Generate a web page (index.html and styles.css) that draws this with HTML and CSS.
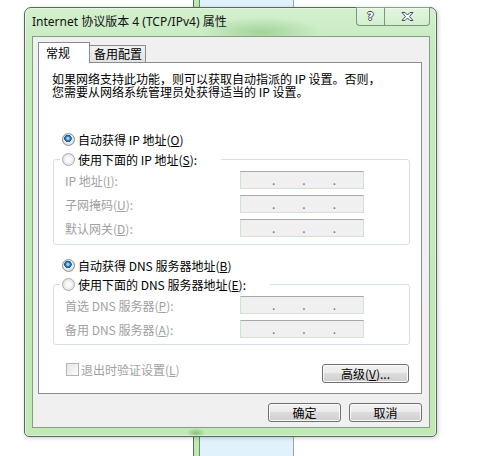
FILE: index.html
```html
<!DOCTYPE html>
<html lang="zh-CN">
<head>
    <meta charset="UTF-8">
    <meta name="viewport" content="width=device-width, initial-scale=1.0">
    <title>Internet 协议版本 4 (TCP/IPv4) 属性</title>
    <link rel="stylesheet" href="styles.css">
</head>
<body>
    <!-- window behind the dialog -->
    <div class="bg-window"></div>

    <div class="dialog">
        <div class="title-bar">
            <span class="title">Internet 协议版本 4 (TCP/IPv4) 属性</span>
            <div class="caption-buttons">
                <div class="cap-btn help"><span>?</span></div>
                <div class="cap-btn close">
                    <svg width="13" height="9" viewBox="0 0 13 9">
                        <polygon points="1,0.5 4,0.5 6.5,3 9,0.5 12,0.5 8.5,4.5 12,8.5 9,8.5 6.5,6 4,8.5 1,8.5 4.5,4.5"
                                 fill="#fff" stroke="#3d4b5c" stroke-width="1" stroke-linejoin="round"/>
                    </svg>
                </div>
            </div>
        </div>

        <div class="client">
            <div class="tabs">
                <div class="tab active">常规</div>
                <div class="tab">备用配置</div>
            </div>

            <div class="tab-page">
                <p class="intro">如果网络支持此功能，则可以获取自动指派的 IP 设置。否则，<br>您需要从网络系统管理员处获得适当的 IP 设置。</p>

                <div class="radio-row first">
                    <span class="radio on"></span>自动获得 IP 地址(<u>O</u>)
                </div>

                <fieldset class="group">
                    <legend><span class="radio"></span>使用下面的 IP 地址(<u>S</u>):</legend>
                    <div class="field">
                        <span class="field-label">IP 地址(<u>I</u>):</span>
                        <span class="ipbox"><i>.</i><i>.</i><i>.</i></span>
                    </div>
                    <div class="field">
                        <span class="field-label">子网掩码(<u>U</u>):</span>
                        <span class="ipbox"><i>.</i><i>.</i><i>.</i></span>
                    </div>
                    <div class="field">
                        <span class="field-label">默认网关(<u>D</u>):</span>
                        <span class="ipbox"><i>.</i><i>.</i><i>.</i></span>
                    </div>
                </fieldset>

                <div class="radio-row second">
                    <span class="radio on"></span>自动获得 DNS 服务器地址(<u>B</u>)
                </div>

                <fieldset class="group dns">
                    <legend><span class="radio"></span>使用下面的 DNS 服务器地址(<u>E</u>):</legend>
                    <div class="field">
                        <span class="field-label">首选 DNS 服务器(<u>P</u>):</span>
                        <span class="ipbox"><i>.</i><i>.</i><i>.</i></span>
                    </div>
                    <div class="field">
                        <span class="field-label">备用 DNS 服务器(<u>A</u>):</span>
                        <span class="ipbox"><i>.</i><i>.</i><i>.</i></span>
                    </div>
                </fieldset>

                <div class="bottom-row">
                    <div class="check-row"><span class="checkbox"></span>退出时验证设置(<u>L</u>)</div>
                    <button class="btn advanced">高级(<u>V</u>)...</button>
                </div>
            </div>

            <div class="dialog-buttons">
                <button class="btn">确定</button>
                <button class="btn">取消</button>
            </div>
        </div>
    </div>
</body>
</html>
```

FILE: styles.css
```css
*{
    box-sizing: border-box;
}
body{
    margin: 0;
    width: 477px;
    height: 456px;
    overflow: hidden;
    position: relative;
    background: #fff;
    font-family: "Noto Sans CJK SC", sans-serif;
    font-size: 12px;
    color: #000;
}
u{
    text-decoration: underline;
}

/* the window peeking out behind */
.bg-window{
    position: absolute;
    left: 193px;
    top: 0;
    width: 101px;
    height: 456px;
    background: linear-gradient(to right, #5b6f5b 0 1px, #bde9b2 1px 6px, #6f8c6f 6px 7px, #e0f3fc 7px);
    border-right: 1px solid #a5a5a5;
}

.dialog{
    position: absolute;
    left: 24px;
    top: 7px;
    width: 413px;
    height: 430px;
    display: flex;
    flex-direction: column;
    padding: 0 6px 8px 7px;
    border: 1px solid #56695a;
    border-radius: 7px 7px 5px 5px;
    background:
        radial-gradient(60px 15px at 236px 24px, rgba(130,190,120,.55), rgba(130,190,120,0)),
        radial-gradient(9px 5px at 171px 425px, rgba(110,175,100,.7), rgba(110,175,100,0)),
        linear-gradient(#d3f0ce, #c6ebbe 40px, #c0e9b6);
    box-shadow: inset 0 0 0 1px rgba(255,255,255,.45), 1px 1px 4px rgba(0,0,0,.2);
}

.title-bar{
    height: 28px;
    display: flex;
    align-items: flex-start;
}
.title{
    font-family: "Noto Sans", "Noto Sans CJK SC", sans-serif;
    line-height: 28px;
    font-size: 12px;
    color: #111;
}
.caption-buttons{
    margin-left: auto;
    margin-top: -1px;
    display: flex;
}
.cap-btn{
    height: 19px;
    display: flex;
    justify-content: center;
    align-items: center;
    border: 1px solid #7f957f;
    border-top: none;
    background: linear-gradient(rgba(255,255,255,.35), rgba(255,255,255,.1));
}
.cap-btn.help{
    width: 28px;
    border-right: none;
    border-radius: 0 0 0 4px;
}
.cap-btn.help span{
    font-family: "DejaVu Sans", sans-serif;
    font-weight: bold;
    font-size: 11px;
    line-height: 11px;
    color: #fff;
    text-shadow: 1px 0 #3d4b5c, -1px 0 #3d4b5c, 0 1px #3d4b5c, 0 -1px #3d4b5c;
}
.cap-btn.close{
    width: 46px;
    border-radius: 0 0 4px 0;
}

.client{
    flex: 1;
    display: flex;
    flex-direction: column;
    padding: 5px 7px 5px 5px;
    background: #f0f0f0;
    border: 1px solid #879c87;
}

.tabs{
    height: 20px;
    display: flex;
    align-items: flex-end;
}
.tab{
    height: 17px;
    margin-left: -1px;
    padding-left: 4px;
    width: 57px;
    line-height: 16px;
    border: 1px solid #898c95;
    border-bottom: none;
    background: linear-gradient(#f2f2f2, #e2e2e2);
}
.tab.active{
    position: relative;
    z-index: 1;
    height: 21px;
    width: 52px;
    margin-left: 0;
    margin-bottom: -1px;
    padding-left: 7px;
    line-height: 20px;
    background: #fff;
}

.tab-page{
    height: 332px;
    padding: 9px 11px 0 13px;
    background: #fff;
    border: 1px solid #898c95;
}
.intro{
    margin: 0;
    line-height: 13px;
    white-space: nowrap;
}

.radio-row{
    height: 16px;
    display: flex;
    align-items: center;
    margin-left: 10px;
    white-space: nowrap;
}
.radio-row.first{
    margin-top: 33px;
}
.radio-row.second{
    margin-top: 12px;
}
.radio{
    width: 13px;
    height: 13px;
    margin-right: 3px;
    flex: none;
    border-radius: 50%;
    border: 1px solid #a9aaaa;
    background: radial-gradient(circle at 50% 50%, #fbfbfb 0 2px, #e4e4e4 5.5px);
}
.radio.on{
    border-color: #8c8f8f;
    background: radial-gradient(circle at 45% 40%, #9cdcf8 0 1px, #2f86c8 2px, #1d4f8c 3.5px, #f1f1f1 4px, #e0e0e0 5.5px);
}

.group{
    margin: 4px 0 0 1px;
    padding: 4px 0 7px 11px;
    border: 1px solid #d5dfe5;
    border-radius: 3px;
    min-width: 0;
}
.group.dns{
    margin-top: 3px;
    padding-bottom: 6px;
}
.group legend{
    height: 16px;
    display: flex;
    align-items: center;
    margin-left: -5px;
    padding: 0 24px 0 2px;
    white-space: nowrap;
}
.field{
    height: 18px;
    display: flex;
    align-items: center;
    color: #a0a0a0;
}
.field + .field{
    margin-top: 6px;
}
.field-label{
    width: 175px;
    white-space: nowrap;
}
.ipbox{
    width: 124px;
    height: 18px;
    display: flex;
    padding-left: 31px;
    background: #f0f0f0;
    border: 1px solid #cfe4cf;
    border-top-color: #a8a8a8;
}
.ipbox i{
    width: 32px;
    font-style: normal;
    line-height: 15px;
    color: #6d6d6d;
}

.bottom-row{
    margin-top: 19px;
    height: 19px;
    display: flex;
    align-items: flex-start;
}
.check-row{
    margin: -1px 0 0 14px;
    height: 13px;
    line-height: 13px;
    display: flex;
    align-items: center;
    color: #a0a0a0;
    white-space: nowrap;
}
.checkbox{
    width: 13px;
    height: 13px;
    margin-right: 2px;
    border: 1px solid #b4b4b4;
    background: linear-gradient(135deg, #e6e6e6, #fbfbfb);
}

.btn{
    height: 19px;
    padding: 0;
    font-family: "Noto Sans CJK SC", sans-serif;
    font-size: 12px;
    line-height: 17px;
    color: #000;
    border: 1px solid #707070;
    border-radius: 3px;
    background: linear-gradient(#f2f2f2, #ebebeb 45%, #dcdcdc 50%, #cfcfcf);
    box-shadow: inset 0 0 0 1px #fbfbfb;
}
.btn.advanced{
    width: 87px;
    margin-left: auto;
    margin-right: 1px;
}

.dialog-buttons{
    margin-top: 9px;
    display: flex;
    justify-content: flex-end;
    gap: 8px;
}
.dialog-buttons .btn{
    width: 73px;
}
```
